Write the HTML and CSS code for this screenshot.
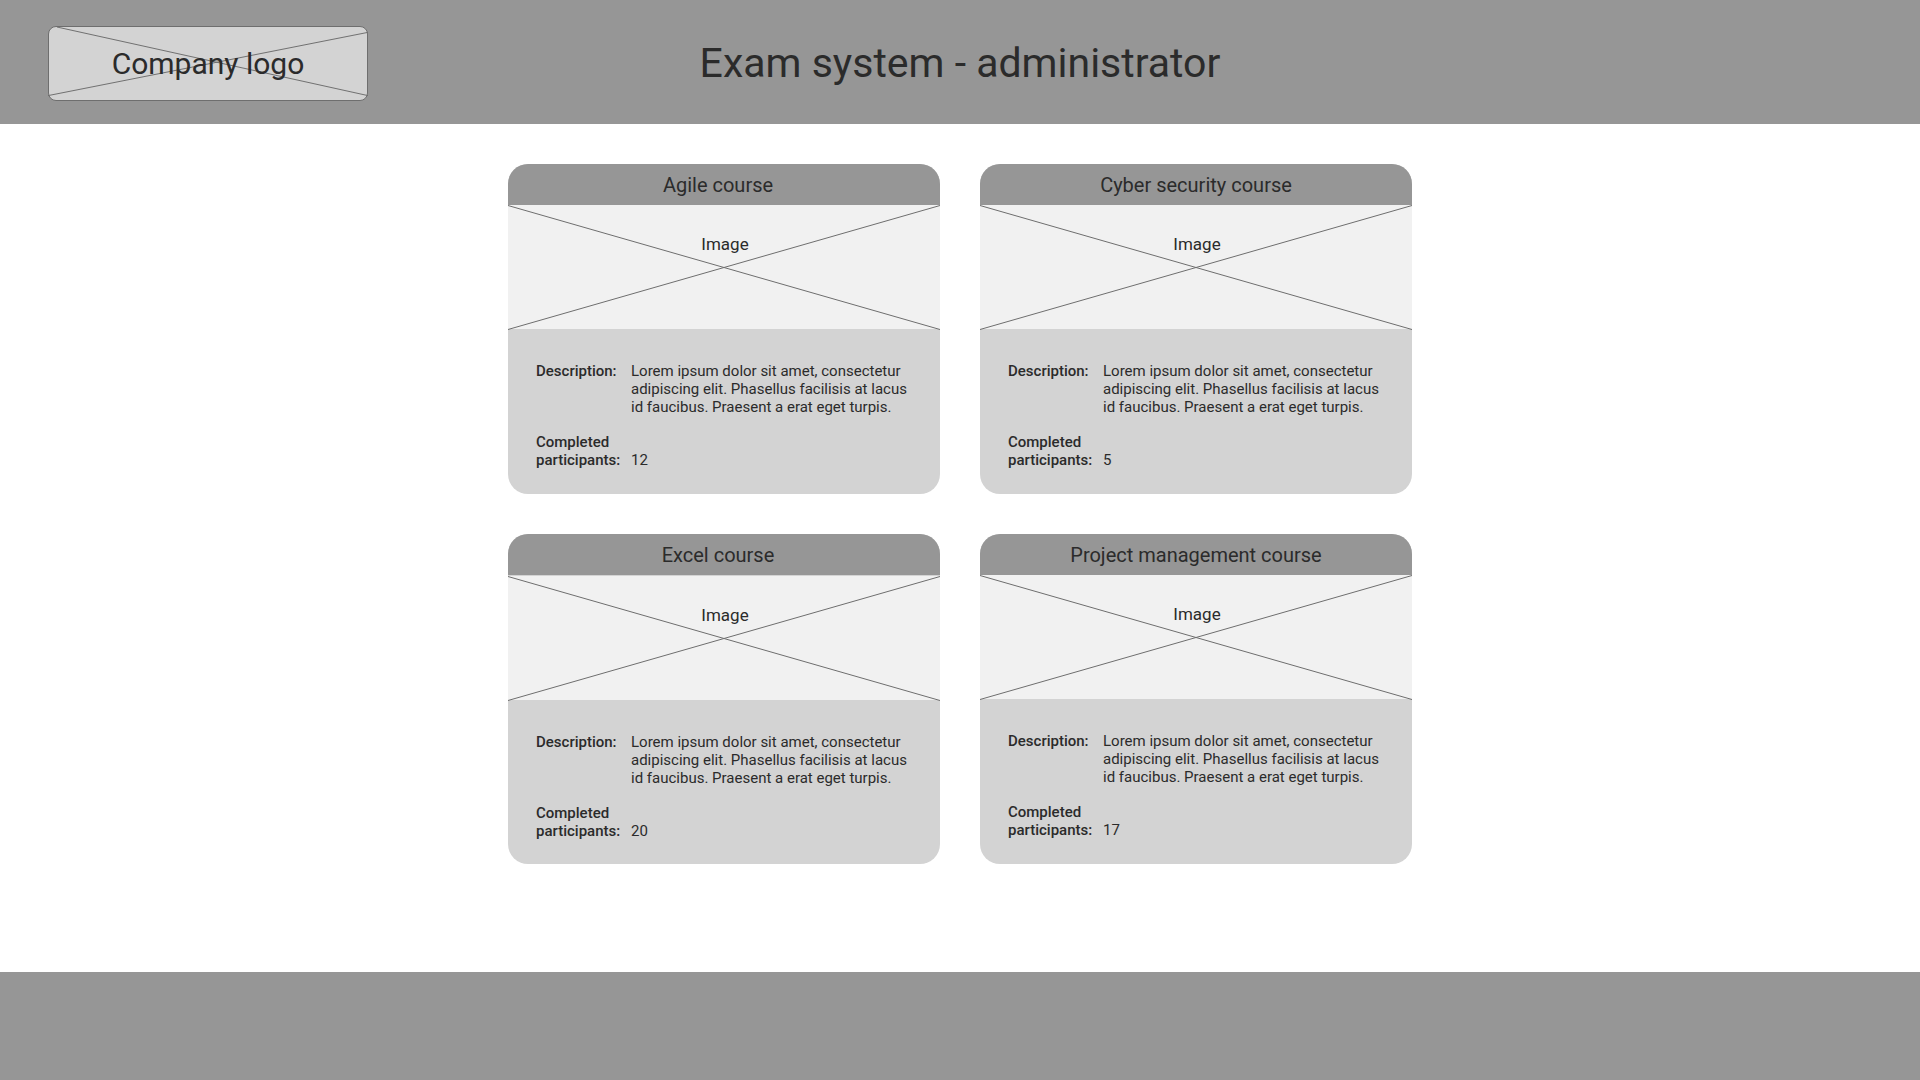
FILE: index.html
```html
<!DOCTYPE html>
<html lang="en">
<head>
<meta charset="utf-8">
<meta name="viewport" content="width=device-width, initial-scale=1">
<title>Exam system - administrator</title>
<link rel="stylesheet" href="styles.css">
</head>
<body>
<header class="site-header">
  <div class="logo">
    <svg class="logo-cross" viewBox="0 0 320 75" preserveAspectRatio="none" aria-hidden="true">
      <path d="M8 0L321 70.500M-1 70.500L321 5.500"/>
    </svg>
    <span class="logo-text">Company logo</span>
  </div>
  <h1 class="site-title">Exam system - administrator</h1>
</header>

<main class="courses">
  <article class="card">
    <h2 class="card-title">Agile course</h2>
    <div class="card-media">
      <svg class="media-cross" viewBox="0 0 432 124" preserveAspectRatio="none" aria-hidden="true"><path d="M0 .5L432 124.500M432 .5L0 124.500"/></svg>
      <span class="media-text">Image</span>
    </div>
    <dl class="card-body">
      <dt>Description:</dt>
      <dd>Lorem ipsum dolor sit amet, consectetur adipiscing elit. Phasellus facilisis at lacus id faucibus. Praesent a erat eget turpis.</dd>
      <dt>Completed participants:</dt>
      <dd class="count">12</dd>
    </dl>
  </article>

  <article class="card">
    <h2 class="card-title">Cyber security course</h2>
    <div class="card-media">
      <svg class="media-cross" viewBox="0 0 432 124" preserveAspectRatio="none" aria-hidden="true"><path d="M0 .5L432 124.500M432 .5L0 124.500"/></svg>
      <span class="media-text">Image</span>
    </div>
    <dl class="card-body">
      <dt>Description:</dt>
      <dd>Lorem ipsum dolor sit amet, consectetur adipiscing elit. Phasellus facilisis at lacus id faucibus. Praesent a erat eget turpis.</dd>
      <dt>Completed participants:</dt>
      <dd class="count">5</dd>
    </dl>
  </article>

  <article class="card card-ruled">
    <h2 class="card-title">Excel course</h2>
    <div class="card-media">
      <svg class="media-cross" viewBox="0 0 432 124" preserveAspectRatio="none" aria-hidden="true"><path d="M0 .5L432 124.500M432 .5L0 124.500"/></svg>
      <span class="media-text">Image</span>
    </div>
    <dl class="card-body">
      <dt>Description:</dt>
      <dd>Lorem ipsum dolor sit amet, consectetur adipiscing elit. Phasellus facilisis at lacus id faucibus. Praesent a erat eget turpis.</dd>
      <dt>Completed participants:</dt>
      <dd class="count">20</dd>
    </dl>
  </article>

  <article class="card">
    <h2 class="card-title">Project management course</h2>
    <div class="card-media">
      <svg class="media-cross" viewBox="0 0 432 124" preserveAspectRatio="none" aria-hidden="true"><path d="M0 .5L432 124.500M432 .5L0 124.500"/></svg>
      <span class="media-text">Image</span>
    </div>
    <dl class="card-body">
      <dt>Description:</dt>
      <dd>Lorem ipsum dolor sit amet, consectetur adipiscing elit. Phasellus facilisis at lacus id faucibus. Praesent a erat eget turpis.</dd>
      <dt>Completed participants:</dt>
      <dd class="count">17</dd>
    </dl>
  </article>
</main>

<footer class="site-footer"></footer>
</body>
</html>
```
FILE: styles.css
```css
* {
  box-sizing: border-box;
}

body {
  margin: 0;
  min-height: 100vh;
  display: flex;
  flex-direction: column;
  background: #fff;
  color: #2b2b2b;
  font-family: Roboto, "Liberation Sans", sans-serif;
  font-size: 15px;
  line-height: 18px;
}

.site-header {
  display: grid;
  grid-template-columns: 1fr auto 1fr;
  align-items: center;
  padding: 24px 48px 23px;
  background: #969696;
}

.logo {
  position: relative;
  display: flex;
  align-items: center;
  justify-content: center;
  width: 320px;
  height: 75px;
  margin-top: 2px;
  border: 1px solid #6e6e6e;
  border-radius: 8px;
  background: #d3d3d3;
}

.logo-cross,
.media-cross {
  position: absolute;
  inset: 0;
  width: 100%;
  height: 100%;
  overflow: visible;
  fill: none;
  stroke: #6e6e6e;
  stroke-width: 1;
}

.logo-text {
  position: relative;
  font-size: 30px;
  line-height: 36px;
}

.site-title {
  margin: 0;
  font-size: 41px;
  font-weight: 400;
  line-height: 48px;
}

.courses {
  flex: 1;
  display: grid;
  grid-template-columns: repeat(auto-fit, 432px);
  justify-content: center;
  align-content: start;
  gap: 40px;
  width: 100%;
  max-width: 984px;
  margin: 0 auto;
  padding: 40px;
}

.card {
  display: flex;
  flex-direction: column;
  min-height: 330px;
  border-radius: 20px;
  background: #d3d3d3;
}

.card-title {
  margin: 0;
  padding: 9px 16px 8px;
  border-radius: 20px 20px 0 0;
  background: #969696;
  font-size: 20px;
  font-weight: 400;
  line-height: 24px;
  text-align: center;
}

.card:nth-child(odd) .card-title {
  padding-right: 28px;
}

.card-ruled .card-media {
  margin-top: 1px;
}

.card-media {
  position: relative;
  height: 124px;
  padding: 29px 0 0 2px;
  background: #f1f1f1;
  text-align: center;
}

.media-text {
  position: relative;
  font-size: 17px;
  line-height: 20px;
}

.card-body {
  display: grid;
  grid-template-columns: 84px 1fr;
  column-gap: 11px;
  row-gap: 17px;
  margin: 0;
  padding: 33px 28px 24px;
}

.card-body dt {
  font-weight: 500;
}

.card-body dd {
  margin: 0;
}

.card-body .count {
  align-self: end;
}

.site-footer {
  height: 108px;
  background: #969696;
}
```
